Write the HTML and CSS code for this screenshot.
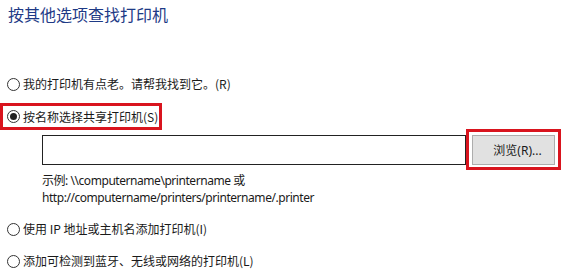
FILE: index.html
```html
<!doctype html>
<html>
<head>
  <meta charset="utf-8">
  <title>添加打印机</title>
  <link rel="stylesheet" href="styles.css">
</head>
<body>

  <h1 class="title">按其他选项查找打印机</h1>

  <div class="options">
    <label class="option first">
      <span class="radio"></span>
      <span>我的打印机有点老。请帮我找到它。(R)</span>
    </label>

    <div class="mark mark-option">
      <label class="option">
        <span class="radio checked"></span>
        <span>按名称选择共享打印机(S)</span>
      </label>
    </div>

    <div class="share">
      <div class="share-row">
        <div class="path-input"></div>
        <div class="mark mark-button">
          <button class="browse">浏览(R)...</button>
        </div>
      </div>
      <p class="hint">示例: \\computername\printername 或<br>http://computername/printers/printername/.printer</p>
    </div>

    <label class="option third">
      <span class="radio"></span>
      <span>使用 IP 地址或主机名添加打印机(I)</span>
    </label>

    <label class="option fourth">
      <span class="radio"></span>
      <span>添加可检测到蓝牙、无线或网络的打印机(L)</span>
    </label>
  </div>

</body>
</html>
```

FILE: styles.css
```css
html, body {
  height: 100%;
}

body {
  margin: 0;
  background: #fff;
  color: #1a1a1a;
  font-family: "Noto Sans", "Noto Sans CJK SC", sans-serif;
  font-size: 12px;
  overflow: hidden;
}

.title {
  margin: 0;
  padding: 3px 0 0 8px;
  font-family: "Noto Sans CJK SC", sans-serif;
  font-size: 16px;
  font-weight: normal;
  line-height: 22px;
  color: #1e3a86;
}

.options {
  margin-top: 49px;
}

.option {
  display: flex;
  align-items: center;
  height: 20px;
  padding-left: 7px;
  gap: 3px;
  font-family: "Noto Sans CJK SC", sans-serif;
  line-height: 20px;
}

.radio {
  box-sizing: border-box;
  width: 13px;
  height: 13px;
  border: 1px solid #333;
  border-radius: 50%;
  background: #fff;
  display: flex;
  justify-content: center;
  align-items: center;
}

.radio.checked::after {
  content: "";
  width: 7px;
  height: 7px;
  border-radius: 50%;
  background: #222;
}

.mark {
  border: 3px solid #d9141e;
}

.mark-option {
  width: 156px;
  height: 21px;
  margin-top: 9px;
  display: flex;
  align-items: center;
}

.mark-option .option {
  padding-left: 4px;
}

.share {
  padding-left: 42px;
}

.share-row {
  display: flex;
  align-items: center;
  margin-top: -1px;
}

.path-input {
  box-sizing: border-box;
  width: 424px;
  height: 30px;
  border: 1px solid #222;
  background: #fff;
}

.mark-button {
  padding: 3px 0 2px 3px;
  width: 86px;
}

.browse {
  display: block;
  box-sizing: border-box;
  width: 83px;
  height: 30px;
  border: 1px solid #adadad;
  background: #e1e1e1;
  font-family: "Noto Sans", "Noto Sans CJK SC", sans-serif;
  font-size: 12px;
  color: #1a1a1a;
  padding: 0 0 0 8px;
}

.hint {
  margin: 2px 0 0;
  line-height: 17px;
  letter-spacing: -0.45px;
}

.third {
  margin-top: 13px;
}

.fourth {
  margin-top: 12px;
}
```
